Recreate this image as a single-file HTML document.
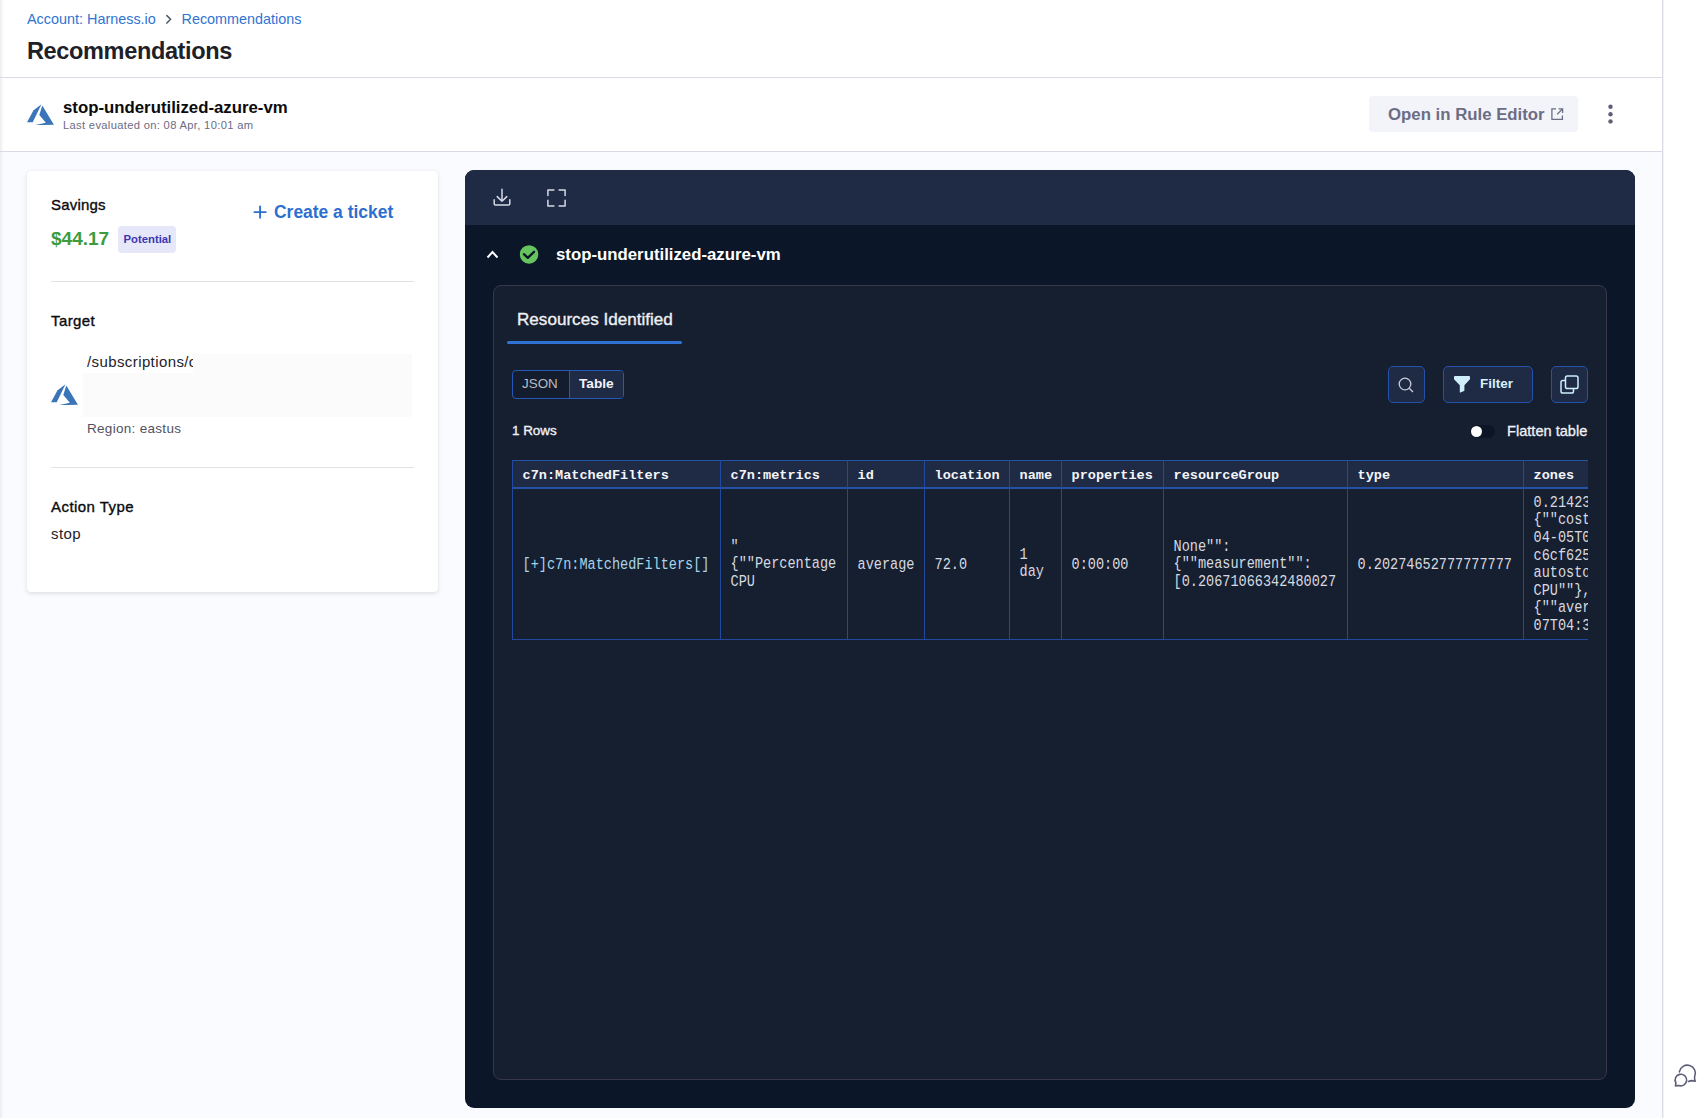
<!DOCTYPE html>
<html><head><meta charset="utf-8">
<style>
*{box-sizing:border-box;margin:0;padding:0}
html,body{width:1706px;height:1118px;overflow:hidden;background:#fff;font-family:"Liberation Sans",sans-serif}
.abs{position:absolute}
.t{position:absolute;white-space:pre;line-height:1}
#main{position:absolute;left:0;top:0;width:1662px;height:1118px;background:#fafbfe}
#hdr{position:absolute;left:0;top:0;width:1662px;height:151px;background:#fff}
.hl{position:absolute;left:0;width:1662px;height:1px;background:#d9dae5}
#vline{position:absolute;left:1662px;top:0;width:1px;height:1118px;background:#dcdce7;box-shadow:1px 0 0 #f2f2f6}
#leftshade{position:absolute;left:0;top:0;width:4px;height:1118px;background:linear-gradient(to right,#ececf0,rgba(240,240,244,0.5) 50%,rgba(255,255,255,0))}
.card{position:absolute;left:27px;top:171px;width:411px;height:421px;background:#fff;border-radius:4px;box-shadow:0 0 1px rgba(40,41,61,.08),0 1.5px 4px rgba(96,97,112,.16)}
.div{position:absolute;height:1px;background:#e2e2e4}
#panel{position:absolute;left:465px;top:170px;width:1169.5px;height:938px;background:#0b1628;border-radius:9px;overflow:hidden}
#tool{position:absolute;left:0;top:0;width:1170px;height:55px;background:#1f2a45}
#inner{position:absolute;left:27.5px;top:114.5px;width:1114.5px;height:795.5px;background:#161f30;border:1.3px solid #39384a;border-radius:8px}
.btn{position:absolute;background:#1f2a45;border:1.7px solid #2452aa;border-radius:5px}
.vl{top:0;width:1.4px;height:180.2px;background:#2149a0}
.th{position:absolute;top:7px;white-space:pre;font-family:"Liberation Mono",monospace;font-size:13.55px;font-weight:700;color:#f4f5f8;line-height:17.6px}
.td{position:absolute;white-space:pre;font-family:"Liberation Mono",monospace;font-size:13.55px;color:#d6d9e0;line-height:15.04px;transform:scaleY(1.17);transform-origin:0 0}
</style></head><body>
<div id="main">
  <div id="hdr"></div>
  <div id="leftshade"></div>
  <div class="hl" style="top:77px"></div>
  <div class="hl" style="top:151px"></div>

  <!-- breadcrumb -->
  <div class="t" style="left:27px;top:12px;font-size:14.4px;color:#2f74d2">Account: Harness.io</div>
  <svg class="abs" style="left:165px;top:14px" width="8" height="11" viewBox="0 0 8 11"><path d="M1.9 1.6 L5.6 5.3 L1.9 9.1" fill="none" stroke="#4f5866" stroke-width="1.5" stroke-linecap="round" stroke-linejoin="round"/></svg>
  <div class="t" style="left:181.5px;top:12px;font-size:14.4px;color:#2f74d2">Recommendations</div>
  <div class="t" style="left:27px;top:39.5px;font-size:23.5px;letter-spacing:-0.35px;font-weight:700;color:#202028">Recommendations</div>

  <!-- row 2 -->
  <svg class="abs" style="left:27px;top:104px" width="27" height="21" viewBox="0 0 27 21">
    <path d="M14.46 0.15 L6.59 6.3 L0 18.3 L5.73 18.3 Z" fill="#3b75b9"/>
    <path d="M15.3 1.6 L12.3 10.9 L18.9 18.75 L7.7 21.2 L26.9 20.75 Z" fill="#3b75b9"/>
  </svg>
  <div class="t" style="left:63px;top:100px;font-size:16.8px;font-weight:700;color:#0b0b0d">stop-underutilized-azure-vm</div>
  <div class="t" style="left:63px;top:120.2px;font-size:11.2px;letter-spacing:0.32px;color:#6b6d85">Last evaluated on: 08 Apr, 10:01 am</div>

  <div class="abs" style="left:1369px;top:96px;width:209px;height:36px;background:#f3f3fa;border-radius:4px"></div>
  <div class="t" style="left:1388px;top:106.7px;font-size:16.8px;font-weight:700;color:#6b6d85">Open in Rule Editor</div>
  <svg class="abs" style="left:1550.5px;top:108.3px" width="13" height="13" viewBox="0 0 13 13"><path d="M5 0.9 H0.9 V11.4 H11.4 V7.4" fill="none" stroke="#6b6d85" stroke-width="1.3"/><path d="M7.6 0.9 H11.6 V4.9 M11.6 0.9 L6.2 6.3" fill="none" stroke="#6b6d85" stroke-width="1.3"/></svg>
  <svg class="abs" style="left:1606px;top:104px" width="9" height="20" viewBox="0 0 9 20"><circle cx="4.5" cy="2.8" r="2.2" fill="#5d5f77"/><circle cx="4.5" cy="10.2" r="2.2" fill="#5d5f77"/><circle cx="4.5" cy="17.4" r="2.2" fill="#5d5f77"/></svg>

  <!-- left card -->
  <div class="card"></div>
  <div class="t" style="left:51px;top:197.4px;font-size:15px;letter-spacing:0.2px;-webkit-text-stroke:0.35px #0b0b0d;color:#0b0b0d">Savings</div>
  <div class="t" style="left:51px;top:229px;font-size:19px;font-weight:700;color:#3e9c40">$44.17</div>
  <div class="abs" style="left:118px;top:226px;width:58px;height:27px;background:#e7e7fa;border-radius:4px"></div>
  <div class="t" style="left:123.5px;top:233.5px;font-size:11.3px;font-weight:700;color:#3b37ae">Potential</div>
  <svg class="abs" style="left:253px;top:205px" width="14" height="14" viewBox="0 0 14 14"><path d="M7.1 1.5 V12.7 M1.4 7.1 H12.8" stroke="#2d6fce" stroke-width="1.9" stroke-linecap="round"/></svg>
  <div class="t" style="left:274px;top:204px;font-size:17.45px;font-weight:700;color:#2d6fce">Create a ticket</div>
  <div class="div" style="left:51px;top:281px;width:363px"></div>

  <div class="t" style="left:51px;top:313.1px;font-size:15px;letter-spacing:0.4px;-webkit-text-stroke:0.35px #0b0b0d;color:#0b0b0d">Target</div>
  <div class="abs" style="left:83px;top:354px;width:329px;height:63px;background:#fbfbfb"></div>
  <div class="abs" style="left:83px;top:354px;width:110px;height:18.7px;background:#fff"></div>
  <div class="abs" style="left:87px;top:351px;width:106px;height:20px;overflow:hidden"><div class="t" style="left:0;top:3.1px;font-size:15px;letter-spacing:0.4px;color:#22222a">/subscriptions/c</div></div>
  <svg class="abs" style="left:51px;top:384px" width="27" height="21" viewBox="0 0 27 21">
    <path d="M14.46 0.15 L6.59 6.3 L0 18.3 L5.73 18.3 Z" fill="#3b75b9"/>
    <path d="M15.3 1.6 L12.3 10.9 L18.9 18.75 L7.7 21.2 L26.9 20.75 Z" fill="#3b75b9"/>
  </svg>
  <div class="t" style="left:87px;top:421.6px;font-size:13.5px;letter-spacing:0.3px;color:#4f5162">Region: eastus</div>
  <div class="div" style="left:51px;top:467px;width:363px"></div>
  <div class="t" style="left:51px;top:499px;font-size:15px;letter-spacing:0.45px;-webkit-text-stroke:0.35px #0b0b0d;color:#0b0b0d">Action Type</div>
  <div class="t" style="left:51px;top:526px;font-size:15px;letter-spacing:0.4px;color:#22222a">stop</div>

  <!-- dark panel -->
  <div id="panel">
    <div id="tool"></div>
    <svg class="abs" style="left:27.5px;top:18px" width="18" height="19" viewBox="0 0 18 19"><path d="M9 1.2 V13.2 M4.2 8.6 L9 13.2 L13.8 8.6" fill="none" stroke="#d7dae3" stroke-width="1.5" stroke-linecap="round" stroke-linejoin="round"/><path d="M1.2 11.8 V15.8 Q1.2 17 2.4 17 H15.6 Q16.8 17 16.8 15.8 V11.8" fill="none" stroke="#d7dae3" stroke-width="1.5" stroke-linecap="round" stroke-linejoin="round"/></svg>
    <svg class="abs" style="left:82px;top:19px" width="19" height="18" viewBox="0 0 19 18"><path d="M0.9 6.6 V0.9 H6.9 M12.1 0.9 H18.1 V6.6 M18.1 11.2 V17 H12.1 M6.9 17 H0.9 V11.2" fill="none" stroke="#d7dae3" stroke-width="1.5" stroke-linecap="round" stroke-linejoin="round"/></svg>

    <svg class="abs" style="left:21px;top:80px" width="13" height="9" viewBox="0 0 13 9"><path d="M1.5 7.5 L6.5 2 L11.5 7.5" fill="none" stroke="#fff" stroke-width="2"/></svg>
    <svg class="abs" style="left:54px;top:75px" width="21" height="20" viewBox="0 0 21 20"><circle cx="10.05" cy="9.4" r="9.25" fill="#66c45e"/><path d="M4.9 9.2 L8.8 12.8 L15 6.8" fill="none" stroke="#0b1628" stroke-width="2.3" stroke-linecap="round" stroke-linejoin="round"/></svg>
    <div class="t" style="left:91px;top:77px;font-size:16.8px;font-weight:700;color:#fff">stop-underutilized-azure-vm</div>

    <div id="inner"></div>
  </div>

  <!-- inner content (page coords) -->
  <div class="t" style="left:517px;top:311px;font-size:17.1px;-webkit-text-stroke:0.35px #eef0f5;color:#eef0f5">Resources Identified</div>
  <div class="abs" style="left:507px;top:341px;width:175px;height:3px;background:#2f72d4;border-radius:2px"></div>

  <div class="abs" style="left:512px;top:370px;width:112px;height:29px;border:1.5px solid #2757b8;border-radius:4px;background:#141d2d;overflow:hidden">
    <div class="abs" style="left:56px;top:0;width:56px;height:29px;background:#1f2a45;border-left:1.5px solid #2757b8"></div>
  </div>
  <div class="t" style="left:522px;top:377px;font-size:13.4px;color:#b9bcc8">JSON</div>
  <div class="t" style="left:579px;top:377px;font-size:13.7px;font-weight:700;color:#f2f3f7">Table</div>

  <div class="abs" style="left:1388px;top:366px;width:37px;height:37px;background:#1f2a45;border:1.7px solid #2452aa;border-radius:5px"></div>
  <svg class="abs" style="left:1398px;top:377px" width="16" height="16" viewBox="0 0 16 16"><circle cx="7" cy="7" r="5.8" fill="none" stroke="#c9ccd6" stroke-width="1.3"/><path d="M11.2 11.2 L15 15" stroke="#c9ccd6" stroke-width="1.3"/></svg>

  <div class="abs" style="left:1443px;top:366px;width:90px;height:37px;background:#1f2a45;border:1.7px solid #2452aa;border-radius:5px"></div>
  <svg class="abs" style="left:1454px;top:376px" width="16" height="17" viewBox="0 0 16 17"><path d="M1 0 H15 Q16 0 16 1 V3.3 L10.4 9.3 V14.3 Q10.4 14.8 10 15 L6.4 16.6 Q5.8 16.8 5.8 16.2 V9.3 L0 3.3 V1 Q0 0 1 0 Z" fill="#cdeefa"/></svg>
  <div class="t" style="left:1480px;top:377px;font-size:13.5px;font-weight:700;color:#d6f1fb">Filter</div>

  <div class="abs" style="left:1551px;top:366px;width:37px;height:37px;background:#1f2a45;border:1.7px solid #2452aa;border-radius:5px"></div>
  <svg class="abs" style="left:1560px;top:375px" width="19" height="19" viewBox="0 0 19 19"><rect x="5.5" y="1" width="12.5" height="12.5" rx="1.8" fill="none" stroke="#cdeefa" stroke-width="1.5"/><path d="M5.5 5.5 H2.8 Q1 5.5 1 7.3 V16.2 Q1 18 2.8 18 H11.7 Q13.5 18 13.5 16.2 V13.5" fill="none" stroke="#cdeefa" stroke-width="1.5"/></svg>

  <div class="t" style="left:512px;top:424px;font-size:13.4px;-webkit-text-stroke:0.35px #f0f1f5;color:#f0f1f5">1 Rows</div>
  <div class="abs" style="left:1470px;top:425px;width:25px;height:13px;background:#0c1526;border-radius:7px"></div>
  <div class="abs" style="left:1471px;top:426px;width:11px;height:11px;background:#fff;border-radius:50%"></div>
  <div class="t" style="left:1507px;top:424px;font-size:14.6px;-webkit-text-stroke:0.3px #f0f1f5;color:#f0f1f5">Flatten table</div>

  <!-- table -->
  <div id="tbl" class="abs" style="left:512px;top:460px;width:1076px;height:181px;overflow:hidden">
    <div class="abs" style="left:0;top:0;width:1200px;height:28px;background:#1f2a45"></div>
    <div class="abs" style="left:0;top:28px;width:1200px;height:151px;background:#161f2f"></div>
    <div class="abs" style="left:0;top:0;width:1200px;height:1.3px;background:#2352a6"></div>
    <div class="abs" style="left:0;top:27.3px;width:1200px;height:1.5px;background:#2352a6"></div>
    <div class="abs" style="left:0;top:178.7px;width:1200px;height:1.5px;background:#2149a0"></div>
    <div class="abs vl" style="left:0px"></div>
    <div class="abs vl" style="left:208px"></div>
    <div class="abs vl" style="left:335px"></div>
    <div class="abs vl" style="left:412px"></div>
    <div class="abs vl" style="left:497px"></div>
    <div class="abs vl" style="left:549px"></div>
    <div class="abs vl" style="left:651px"></div>
    <div class="abs vl" style="left:835px"></div>
    <div class="abs vl" style="left:1011px"></div>

    <div class="th" style="left:10.5px">c7n:MatchedFilters</div>
    <div class="th" style="left:218.5px">c7n:metrics</div>
    <div class="th" style="left:345.5px">id</div>
    <div class="th" style="left:422.5px">location</div>
    <div class="th" style="left:507.5px">name</div>
    <div class="th" style="left:559.5px">properties</div>
    <div class="th" style="left:661.5px">resourceGroup</div>
    <div class="th" style="left:845.5px">type</div>
    <div class="th" style="left:1021.5px">zones</div>

    <div class="td" style="left:10.5px;top:95.9px;color:#a6d4ea">[+]c7n:MatchedFilters[]</div>
    <div class="td" style="left:218.5px;top:78.3px">"
{""Percentage
CPU</div>
    <div class="td" style="left:345.5px;top:95.9px">average</div>
    <div class="td" style="left:422.5px;top:95.9px">72.0</div>
    <div class="td" style="left:507.5px;top:86.3px">1
day</div>
    <div class="td" style="left:559.5px;top:95.9px">0:00:00</div>
    <div class="td" style="left:661.5px;top:78.3px">None"":
{""measurement"":
[0.20671066342480027</div>
    <div class="td" style="left:845.5px;top:95.9px">0.20274652777777777</div>
    <div class="td" style="left:1021.5px;top:33.8px">0.21423
{""cost
04-05T0
c6cf625
autosto
CPU""},
{""aver
07T04:3</div>
  </div>
</div>
<div id="vline"></div>
<svg class="abs" style="left:1672px;top:1062px" width="26" height="26" viewBox="0 0 26 26"><path d="M7.32 9.9 A8.1 8.1 0 1 1 22.64 14.72 Q22.2 16.5 23.2 19.3 L19.8 18.6 Q18.2 18.8 16.5 19.4" fill="none" stroke="#5d5f77" stroke-width="1.6" stroke-linecap="round" stroke-linejoin="round"/><path d="M3.88 20.9 A5.8 5.8 0 1 1 6.92 23.45 L3.5 23.9 Z" fill="none" stroke="#5d5f77" stroke-width="1.6" stroke-linejoin="round"/></svg>
</body></html>
